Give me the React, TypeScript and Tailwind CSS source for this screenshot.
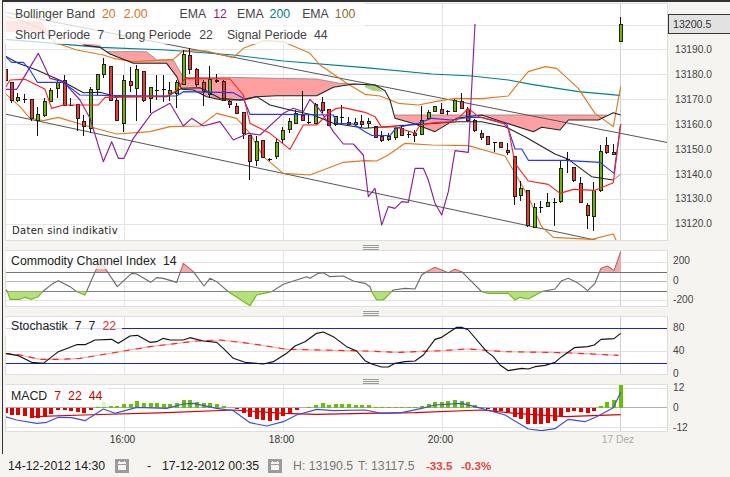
import React from "react";

type N = number[];
const off = (a: N, dx = 1095): N => a.map((v, i) => (i % 2 === 0 ? v + dx : v));
const pts = (a: N) => {
  const o: string[] = [];
  for (let i = 0; i < a.length; i += 2) o.push(a[i] + "," + a[i + 1]);
  return o.join(" ");
};
const snap = (z: number) => Math.floor(z / 3) * 3 + 1.5;

// candles: x, wickTop, bodyTop, bodyBottom, wickBottom, kind (r/g/d)
type C = [number, number, number, number, number, string];
const left: C[] = [
  [18,208,208,242,242,"r"],[36,246,246,300,310,"r"],[55,280,291,302,305,"g"],[75,283,298,298,310,"d"],[95,298,298,355,362,"r"],[114,322,343,362,407,"g"],[134,295,304,347,350,"g"],[154,265,271,305,305,"g"],[174,240,248,265,295,"g"],[194,225,240,315,318,"r"],[214,293,315,315,318,"d"],[233,314,314,355,392,"r"],[253,345,364,380,407,"r"],[273,262,268,385,400,"g"],[293,223,223,268,285,"g"],[312,175,193,223,233,"g"],[332,197,199,300,303,"r"],[352,290,301,360,362,"r"],[372,225,240,370,397,"g"],[392,200,243,257,276,"r"],[412,195,208,265,362,"g"],[432,214,214,302,305,"r"],[452,262,262,295,340,"g"],[471,225,270,270,300,"d"],[491,225,268,268,305,"d"],[511,245,271,280,303,"g"],[531,240,248,280,325,"g"],[551,150,162,252,255,"g"],[571,145,166,208,222,"r"],[591,205,208,253,260,"r"],[611,240,247,275,317,"r"],[631,198,238,283,295,"g"],[651,222,240,245,250,"r"],[671,240,245,300,303,"r"],[691,300,303,314,325,"r"],[711,308,320,340,340,"r"],[731,337,337,400,417,"r"],[750,407,407,485,540,"r"],[770,408,424,482,497,"g"],[790,421,421,472,475,"r"],[810,473,477,477,482,"d"],[830,415,427,470,478,"g"],[850,380,392,418,428,"g"],[870,355,365,387,400,"g"],[888,330,340,370,372,"g"],[908,273,345,360,362,"r"],[928,345,366,366,372,"d"],[948,310,314,370,372,"g"],[968,290,307,330,340,"r"],[988,328,328,375,378,"r"],[1008,350,350,372,378,"g"],[1027,315,353,353,370,"d"],[1047,350,366,372,375,"r"],[1067,355,367,374,375,"g"],[1087,345,364,374,380,"r"],
];
const right: C[] = [
  [12,355,364,370,383,"g"],[32,378,380,412,413,"r"],[52,392,408,422,425,"r"],[72,398,408,418,422,"g"],[92,380,386,412,420,"g"],[112,378,386,405,408,"r"],[132,392,402,402,413,"d"],[151,390,400,405,425,"r"],[171,318,362,402,402,"g"],[191,330,336,355,360,"g"],[211,318,320,335,337,"g"],[231,310,328,341,343,"r"],[250,330,333,333,345,"d"],[270,296,302,333,335,"g"],[290,280,305,325,325,"r"],[310,320,327,360,365,"r"],[330,357,360,392,397,"r"],[350,390,400,413,420,"r"],[369,408,410,434,436,"r"],[389,425,428,428,455,"d"],[409,427,428,442,445,"r"],[429,430,451,458,465,"r"],[449,468,470,590,615,"r"],[469,543,566,586,602,"g"],[489,572,572,677,680,"r"],[509,610,622,682,683,"g"],[529,602,622,622,640,"d"],[549,580,607,620,622,"g"],[569,595,607,607,677,"d"],[588,482,505,605,608,"g"],[608,457,478,478,518,"d"],[628,502,502,542,545,"r"],[648,530,550,607,608,"r"],[668,610,616,647,688,"r"],[688,547,571,650,692,"g"],[708,434,454,571,575,"g"],[727,412,435,458,463,"r"],[747,433,457,463,465,"g"],[767,52,72,124,124,"g"],
];
const candles: C[] = [...left, ...right.map((c) => [c[0] + 1095, c[1], c[2], c[3], c[4], c[5]] as C)];

const teal = [15,118,100,125,300,142,500,150,700,165,850,183,1095,203,...off([200,222,320,228,430,240,500,253,640,275,765,286])];
const blue = [15,168,35,187,70,187,90,210,112,247,190,247,240,285,350,287,500,288,530,288,550,275,700,278,730,295,750,343,850,343,1000,345,1010,370,1060,372,1095,395,...off([20,406,75,407,92,385,130,375,160,370,200,355,260,360,310,352,350,352,410,368,425,372,450,447,470,447,490,481,600,481,705,487,747,520,767,372])];
const red = [15,265,30,240,75,238,110,255,135,268,155,325,190,315,295,315,315,292,345,292,500,288,525,275,545,250,555,235,690,237,730,285,750,370,810,400,870,448,910,375,950,375,985,340,1010,325,1030,323,1095,337,...off([30,350,50,382,90,380,150,400,165,375,210,368,270,365,310,325,340,350,415,370,430,385,450,490,490,543,550,553,585,580,625,568,690,571,745,548,767,372])];
const upper = [15,48,60,60,120,85,170,130,230,150,310,165,340,175,400,185,520,178,535,165,550,152,620,153,700,173,730,145,790,122,850,125,930,160,960,195,1040,250,1095,283,...off([45,288,100,310,160,315,210,305,270,295,350,296,430,288,450,262,490,215,540,200,575,205,640,265,690,340,745,380,767,260])];
const lower = [15,280,60,320,90,355,130,362,175,352,250,375,350,402,450,395,510,380,600,378,650,340,710,355,750,400,790,470,850,520,930,525,1030,487,1095,482,...off([35,483,70,465,120,430,200,435,310,437,420,468,450,520,490,590,530,680,565,712,680,718,745,702,755,725])];
const purple = [15,268,50,268,115,160,150,235,190,245,240,300,270,355,310,485,335,425,355,475,372,475,400,415,455,340,510,310,550,378,575,355,610,378,660,365,700,420,745,400,780,405,850,340,880,325,910,335,930,298,960,330,1000,395,1030,432,1060,432,1090,465,1095,505,...off([10,590,30,565,50,675,70,620,90,625,110,605,130,607,150,505,175,505,190,540,210,610,230,645,250,575,270,452,310,457,330,72])];
const black = [15,168,55,190,110,210,190,245,250,278,300,277,350,290,500,290,545,265,600,263,660,295,720,300,770,290,810,315,870,330,940,345,1000,370,1095,385,...off([90,378,280,365,350,365,420,380,480,410,570,462,610,478,680,530,745,540])];
const span = [250,135,300,142,330,162,400,190,500,190,530,230,545,268,580,270,620,290,665,300,730,300,770,290,830,287,950,287,1000,262,1060,252,1125,255,...off([60,272,75,300,90,355,150,372,210,395,275,355,350,345,420,368,505,395,530,382,585,390,610,360,700,360,745,338,767,345])];
const cloud1 = [15,62,120,62,150,100,230,125,300,135,320,155,440,155,470,180,520,180,550,232,690,232,830,235,950,237,1020,250,1110,255,1060,252,1000,262,950,287,830,287,770,290,730,300,665,300,620,290,580,270,545,268,530,230,500,190,400,190,330,162,300,142,250,135,145,95,15,95];
const cloudTop = [320,155,440,155,470,180,520,180,550,232,690,232,830,235,950,237,1020,250,1110,255];
const cloud2 = off([90,345,725,345,700,360,610,360,585,390,530,382,505,395,420,368,350,345,275,355,210,395,150,372,90,355]);
const greenCloud = off([0,255,30,255,55,275,25,273,0,262]);

const cci = [15,145,22,155,30,178,60,178,75,172,95,178,115,170,130,153,155,133,175,122,210,140,230,155,255,165,300,62,352,140,395,100,410,102,452,127,470,113,490,115,530,127,550,70,580,95,612,138,630,115,650,125,685,155,750,197,770,165,815,155,850,133,920,110,930,115,955,100,970,98,990,110,1030,108,1060,123,1095,130,...off([15,140,20,155,35,180,55,180,85,150,120,145,150,147,170,105,185,95,210,82,250,98,270,88,290,95,350,155,370,160,430,160,450,180,465,172,490,177,530,155,570,147,590,122,610,115,640,130,668,152,690,130,708,85,728,78,747,92,767,35])];

const stoch = [15,340,55,347,95,367,130,370,175,335,230,314,255,314,285,300,335,298,355,310,390,288,412,286,450,307,470,305,490,295,510,300,550,300,570,293,610,303,650,307,670,325,700,355,735,367,790,372,820,365,860,340,885,318,915,305,950,280,970,276,1000,290,1040,320,1070,333,1095,362,...off([20,372,50,381,70,381,90,370,120,365,150,363,175,345,210,298,230,292,275,262,290,262,310,270,365,335,385,350,405,375,430,392,470,385,490,387,510,380,540,376,570,367,590,350,628,323,668,320,688,315,708,298,747,296,767,280])];
const stochRed = [15,340,60,345,120,358,180,358,240,355,300,345,360,335,450,320,590,303,660,300,730,308,800,318,860,328,1095,333,...off([100,337,230,332,310,327,420,335,600,338,760,346])];

const macdLeft: [number, number][] = [[18,520],[36,525],[55,525],[75,528],[95,533],[114,533],[134,530],[154,522],[174,511],[194,511],[214,513],[233,517],[253,520],[273,511],[293,497],[312,487],[332,497],[352,499],[372,493],[392,491],[412,483],[432,488],[452,489],[471,490],[491,491],[511,491],[531,489],[551,481],[571,480],[591,487],[611,490],[631,490],[651,491],[671,497],[691,505],[711,507],[731,518],[750,530],[770,536],[790,541],[810,542],[830,540],[850,527],[870,519],[890,511],[908,505],[928,501],[948,494],[968,490],[988,494],[1008,492],[1027,492],[1047,493],[1067,494],[1087,496]];
const macdRight: [number, number][] = [[12,495],[32,501],[52,501],[72,501],[92,501],[112,501],[132,501],[151,501],[171,498],[191,492],[211,486],[231,485],[250,484],[270,480],[290,482],[310,487],[330,494],[350,501],[369,506],[389,512],[409,513],[429,516],[449,531],[469,538],[489,552],[509,553],[529,552],[549,550],[569,542],[588,527],[608,517],[628,512],[648,515],[668,520],[688,514],[708,498],[727,487],[747,480],[767,436]];
const macdBars = [...macdLeft, ...macdRight.map(([x, y]) => [x + 1095, y] as [number, number])];
const macdBlue = [15,530,50,540,110,550,140,547,175,532,215,533,255,542,310,507,345,520,410,502,500,505,550,492,580,490,650,505,700,512,750,548,800,558,850,545,890,525,950,508,1000,512,1095,510,...off([50,520,110,518,170,505,210,495,290,490,350,505,420,525,490,567,530,572,570,566,610,538,660,545,695,530,745,503,767,457])];
const macdRed = [100,530,250,525,500,518,700,510,850,520,950,523,1095,520,...off([150,518,350,510,450,520,600,530,767,524])];

const Grid = ({ ys, top, bottom }: { ys: [number, string][]; top: number; bottom: number }) => (
  <g shapeRendering="crispEdges" strokeWidth={3} fill="none">
    {[373, 850, 1327].map((x) => (
      <line key={x} x1={snap(x)} x2={snap(x)} y1={top} y2={bottom} stroke="#e4e4e4" />
    ))}
    <line x1={snap(1862)} x2={snap(1862)} y1={top} y2={bottom} stroke="#cfcfcf" />
    {ys.map(([y, c]) => (
      <line key={y} x1={15} x2={2004} y1={snap(y)} y2={snap(y)} stroke={c} />
    ))}
  </g>
);

const Line = ({ d, c, w = 3.4, dash }: { d: N; c: string; w?: number; dash?: string }) => (
  <polyline points={pts(d)} fill="none" stroke={c} strokeWidth={w} strokeLinejoin="round" strokeDasharray={dash} />
);

const MainSvg = () => (
  <svg viewBox="15 9 1989 714" className="block h-full w-full">
    <Grid
      top={9}
      bottom={723}
      ys={[75, 149, 223, 297, 372, 447, 522, 597, 672].map((y) => [y, "#e4e4e4"] as [number, string])}
    />
    <polygon points={pts(cloud1)} fill="#ff9f9f" />
    <polygon points={pts(cloud2)} fill="#ff9f9f" />
    <polygon points={pts(greenCloud)} fill="#a9d47c" />
    <Line d={cloudTop} c="#8c8c8c" w={2.6} />
    <Line d={off([90, 345, 725, 345])} c="#8c8c8c" w={2.6} />
    <Line d={[15, 37, 2004, 428]} c="#555555" w={3} />
    <Line d={[15, 342, 1860, 736]} c="#555555" w={3} />
    <Line d={teal} c="#007f8f" />
    <Line d={upper} c="#e0791f" />
    <Line d={lower} c="#e0791f" />
    <g shapeRendering="crispEdges">
      {candles.map((c, i) => {
        const px = Math.round(c[0] / 3);
        const fill = c[5] === "r" ? "#ee3a30" : "#69b800";
        return (
          <g key={i}>
            <line x1={px * 3 - 1.5} x2={px * 3 - 1.5} y1={c[1]} y2={c[4]} stroke="#111111" strokeWidth={3} />
            {c[5] === "d" ? (
              <line x1={px * 3 - 7.5} x2={px * 3 + 4.5} y1={c[2]} y2={c[2]} stroke="#111111" strokeWidth={3} />
            ) : (
              <rect x={px * 3 - 6} y={c[2]} width={9} height={c[3] - c[2]} fill={fill} stroke="#222222" strokeWidth={3} />
            )}
          </g>
        );
      })}
    </g>
    <Line d={span} c="#222222" w={3.2} />
    <Line d={black} c="#222222" w={3.2} />
    <Line d={off([745, 540, 767, 522])} c="#888888" w={3} />
    <Line d={purple} c="#8a1f98" />
    <Line d={blue} c="#2438ff" />
    <Line d={red} c="#ff1f1f" />
  </svg>
);

const CciSvg = () => (
  <svg viewBox="15 30 1989 171" className="block h-full w-full">
    <defs>
      <clipPath id="cUp"><rect x="15" y="30" width="1989" height="67" /></clipPath>
      <clipPath id="cMid"><rect x="15" y="97" width="1989" height="57" /></clipPath>
      <clipPath id="cLow"><rect x="15" y="154" width="1989" height="47" /></clipPath>
    </defs>
    <Grid top={30} bottom={201} ys={[[68, "#e2e2e2"], [181, "#e2e2e2"], [124, "#b5bcbc"], [97, "#6b6f80"], [154, "#6b6f80"]]} />
    <g clipPath="url(#cUp)">
      <polygon points={pts([...cci, 1862, 97, 15, 97])} fill="#e89a9a" fillOpacity={0.8} />
      <Line d={cci} c="#c86060" />
    </g>
    <g clipPath="url(#cLow)">
      <polygon points={pts([...cci, 1862, 154, 15, 154])} fill="#b5e07c" />
      <Line d={cci} c="#74b81a" />
    </g>
    <g clipPath="url(#cMid)">
      <Line d={cci} c="#6a6a6a" />
    </g>
  </svg>
);

const StochSvg = () => (
  <svg viewBox="15 228 1989 177" className="block h-full w-full">
    <Grid top={228} bottom={405} ys={[[334, "#e2e2e2"], [403, "#b8c6d0"], [265, "#2222cc"], [370, "#2222cc"]]} />
    <Line d={stochRed} c="#ffb0b0" />
    <Line d={stochRed} c="#ff2020" dash="18 18" />
    <Line d={stoch} c="#111111" />
  </svg>
);

const MacdSvg = () => (
  <svg viewBox="15 432 1989 144" className="block h-full w-full">
    <Grid top={432} bottom={576} ys={[[445, "#e2e2e2"], [562, "#e2e2e2"], [503, "#b0b0b0"]]} />
    <g shapeRendering="crispEdges">
      {macdBars.map(([x, y], i) => {
        const px = Math.round(x / 3) * 3 - 6;
        const up = y < 503;
        return <rect key={i} x={px} y={up ? y : 503} width={12} height={Math.abs(y - 503)} fill={up ? "#68c000" : "#e00000"} />;
      })}
    </g>
    <Line d={macdRed} c="#d80000" />
    <Line d={macdBlue} c="#3a4fe0" />
  </svg>
);

const Grip = () => (
  <div className="flex h-[9px] w-[663px] flex-col gap-[1px] pl-[358px] pt-[4px]">
    <div className="h-px w-4 bg-[#999]" />
    <div className="h-px w-4 bg-[#999]" />
    <div className="h-px w-4 bg-[#999]" />
  </div>
);

const Calendar = () => (
  <svg viewBox="0 0 14 14" className="h-[14px] w-[14px] shrink-0">
    <rect width="14" height="14" fill="#9b9b9b" />
    <rect x="3" y="3" width="8" height="8" fill="#f4f4f4" />
    <rect x="4" y="2" width="1" height="3" fill="#f4f4f4" />
    <rect x="9" y="2" width="1" height="3" fill="#f4f4f4" />
    <rect x="3" y="5" width="8" height="1" fill="#9b9b9b" />
  </svg>
);

const Panel = ({ h, children }: { h: string; children: React.ReactNode }) => (
  <div className={"relative w-[663px] bg-white outline outline-1 -outline-offset-1 outline-[#dedede] " + h}>{children}</div>
);

const AxisLabels = ({ items, cls }: { items: string[]; cls: string }) => (
  <div className={"flex h-0 flex-1 flex-col pl-[5px] text-[10.2px] text-[#444] " + cls}>
    {items.map((t) => (
      <div key={t} className="shrink-0 leading-[12px]">{t}</div>
    ))}
  </div>
);

export default function App() {
  return (
    <div className="h-[477px] w-[730px] overflow-hidden bg-[#f5f4f0] text-[12.3px] leading-none text-[#333]" style={{ fontFamily: '"Liberation Sans", Arial, sans-serif' }}>
      <div className="ml-[2px] flex h-[454px] flex-col border-l border-t-2 border-[#333] pl-[2px] pt-px">
        <div className="flex">
          <Panel h="h-[238px]">
            <MainSvg />
            <div className="absolute left-0 top-0 flex h-[41px] w-[360px] flex-col gap-[9px] bg-white/75 pl-[10px] pt-[5px] text-[#444]">
              <div className="flex h-[12px] items-center">
                <span>Bollinger Band</span>
                <span className="ml-[7px] text-[#e0701c]">20</span>
                <span className="ml-[8px] text-[#e0701c]">2.00</span>
                <span className="ml-[32px]">EMA</span>
                <span className="ml-[7px] text-[#a01a70]">12</span>
                <span className="ml-[10px]">EMA</span>
                <span className="ml-[6px] text-[#00798a]">200</span>
                <span className="ml-[12px]">EMA</span>
                <span className="ml-[6px] text-[#8a6a30]">100</span>
              </div>
              <div className="flex h-[12px] items-center">
                <span>Short Periode</span>
                <span className="ml-[7px]">7</span>
                <span className="ml-[14px]">Long Periode</span>
                <span className="ml-[8px]">22</span>
                <span className="ml-[14px]">Signal Periode</span>
                <span className="ml-[7px]">44</span>
              </div>
            </div>
            <div className="absolute left-[7px] top-[223px] text-[10px] tracking-[0.3px] text-[#222]" style={{ fontFamily: '"DejaVu Sans", sans-serif' }}>Daten sind indikativ</div>
          </Panel>
          <div className="flex-1 pt-[11px]">
            <div className="flex h-[20px] items-center border border-r-0 border-[#333] bg-[#e2e2e2] pl-[4px] text-[10.6px] text-[#333]">13200.5</div>
            <div className="mt-[4px] flex flex-col pl-[7px] text-[10.2px] text-[#444]">
              {["13190.0", "13180.0", "13170.0", "13160.0", "13150.0", "13140.0", "13130.0", "13120.0"].map((t) => (
                <div key={t} className="flex h-[24.86px] items-center">{t}</div>
              ))}
            </div>
          </div>
        </div>
        <Grip />
        <div className="flex">
          <Panel h="h-[57px]">
            <CciSvg />
            <div className="absolute left-0 top-px flex h-[18px] w-[175px] items-center bg-white/75 pl-[6px] pt-[3px] text-[#222]">
              <span>Commodity Channel Index</span>
              <span className="ml-[7px]">14</span>
            </div>
          </Panel>
          <AxisLabels items={["200", "0", "-200"]} cls="gap-[7.5px] pt-[5px]" />
        </div>
        <Grip />
        <div className="flex">
          <Panel h="h-[59px]">
            <StochSvg />
            <div className="absolute left-0 top-px flex h-[19px] w-[117px] items-center bg-white/80 pl-[6px] text-[#222]">
              <span>Stochastik</span>
              <span className="ml-[7px]">7</span>
              <span className="ml-[7px]">7</span>
              <span className="ml-[7px] text-[#e03030]">22</span>
            </div>
          </Panel>
          <AxisLabels items={["80", "40", "0"]} cls="gap-[11px] pt-[6px]" />
        </div>
        <Grip />
        <div className="flex">
          <Panel h="h-[48px]">
            <MacdSvg />
            <div className="absolute left-0 top-px flex h-[22px] w-[102px] items-center bg-white/80 pl-[6px] text-[#222]">
              <span>MACD</span>
              <span className="ml-[7px] text-[#cc0000]">7</span>
              <span className="ml-[7px] text-[#cc0000]">22</span>
              <span className="ml-[7px] text-[#cc0000]">44</span>
            </div>
          </Panel>
          <AxisLabels items={["12", "0", "-12"]} cls="gap-[8px] -mt-[2px]" />
        </div>
        <div className="flex h-[13px] items-end pl-[38px] text-[10.2px] text-[#333]">
          <div className="w-[159px] text-center">16:00</div>
          <div className="w-[159px] text-center">18:00</div>
          <div className="w-[159px] text-center">20:00</div>
          <div className="w-[196px] text-center text-[#aaa]">17 Dez</div>
        </div>
      </div>
      <div className="flex h-[23px] items-center pl-[8px] pt-[1px] text-[#222]">
        <span className="w-[107px]">14-12-2012 14:30</span>
        <Calendar />
        <span className="ml-[18px] w-[15px]">-</span>
        <span className="w-[106px]">17-12-2012 00:35</span>
        <Calendar />
        <span className="ml-[11px] w-[65px] text-[#777]">H: 13190.5</span>
        <span className="w-[68px] text-[#777]">T: 13117.5</span>
        <span className="w-[35px] text-[11.6px] font-bold text-[#e04a40]">-33.5</span>
        <span className="text-[11.6px] font-bold text-[#e04a40]">-0.3%</span>
      </div>
    </div>
  );
}
